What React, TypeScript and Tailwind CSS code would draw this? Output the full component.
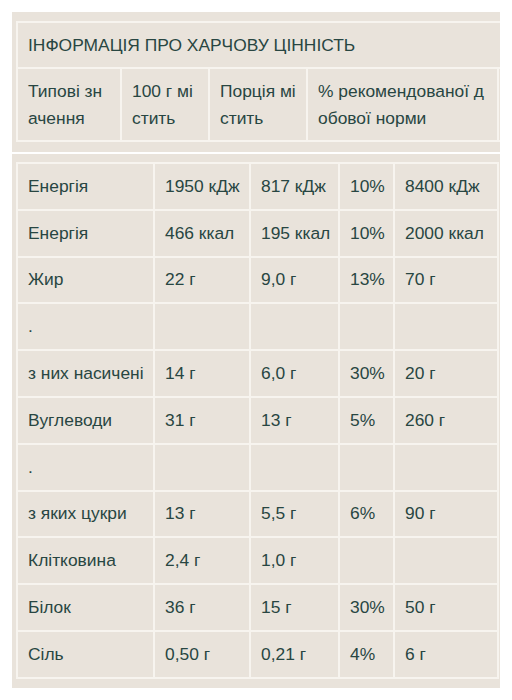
import React from "react";

type Row = [string, string, string, string, string];

const rows: Row[] = [
  ["Енергія", "1950 кДж", "817 кДж", "10%", "8400 кДж"],
  ["Енергія", "466 ккал", "195 ккал", "10%", "2000 ккал"],
  ["Жир", "22 г", "9,0 г", "13%", "70 г"],
  [".", "", "", "", ""],
  ["з них насичені", "14 г", "6,0 г", "30%", "20 г"],
  ["Вуглеводи", "31 г", "13 г", "5%", "260 г"],
  [".", "", "", "", ""],
  ["з яких цукри", "13 г", "5,5 г", "6%", "90 г"],
  ["Клітковина", "2,4 г", "1,0 г", "", ""],
  ["Білок", "36 г", "15 г", "30%", "50 г"],
  ["Сіль", "0,50 г", "0,21 г", "4%", "6 г"],
];

const cell = "bg-[#e9e3db] flex items-center px-[10px] whitespace-nowrap overflow-hidden";

export default function App() {
  return (
    <div
      className="bg-white min-h-[700px] pt-3 text-[17.4px] leading-[27px] text-[#284642]"
      style={{ fontFamily: '"Liberation Sans", Arial, sans-serif' }}
    >
      <div className="ml-3 w-[488px] bg-[#e9e3db] pt-[9px] pb-[10px] pl-1 overflow-hidden">
        <div className="grid grid-cols-[102px_86px_96px_189px_40px] gap-[2px] p-[2px] bg-[#f7f4ef] w-max">
          <div className={`${cell} col-span-5 h-[44px]`}>ІНФОРМАЦІЯ ПРО ХАРЧОВУ ЦІННІСТЬ</div>
          <div className={`${cell} h-[71px]`}>
            Типові зн
            <br />
            ачення
          </div>
          <div className={`${cell} h-[71px]`}>
            100 г мі
            <br />
            стить
          </div>
          <div className={`${cell} h-[71px]`}>
            Порція мі
            <br />
            стить
          </div>
          <div className={`${cell} h-[71px]`}>
            % рекомендованої д
            <br />
            обової норми
          </div>
          <div className={`${cell} h-[71px]`}></div>
        </div>
      </div>

      <div className="ml-3 mt-[2px] w-[488px] bg-[#e9e3db] pt-2 pb-[9px] pl-1 overflow-hidden">
        <div className="grid grid-cols-[135px_94px_87px_53px_102px] gap-[2px] p-[2px] bg-[#f7f4ef] w-max">
          {rows.map((r, i) =>
            r.map((v, j) => (
              <div key={`${i}-${j}`} className={`${cell} h-[44.8px]`}>
                {v}
              </div>
            ))
          )}
        </div>
      </div>
    </div>
  );
}
